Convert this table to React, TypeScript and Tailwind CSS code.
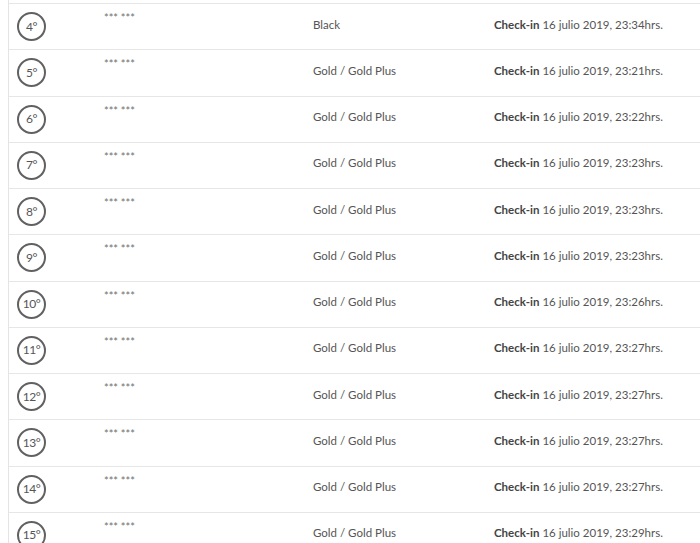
const rows = [
  { pos: 4, tier: 'Black', time: '23:34' },
  { pos: 5, tier: 'Gold / Gold Plus', time: '23:21' },
  { pos: 6, tier: 'Gold / Gold Plus', time: '23:22' },
  { pos: 7, tier: 'Gold / Gold Plus', time: '23:23' },
  { pos: 8, tier: 'Gold / Gold Plus', time: '23:23' },
  { pos: 9, tier: 'Gold / Gold Plus', time: '23:23' },
  { pos: 10, tier: 'Gold / Gold Plus', time: '23:26' },
  { pos: 11, tier: 'Gold / Gold Plus', time: '23:27' },
  { pos: 12, tier: 'Gold / Gold Plus', time: '23:27' },
  { pos: 13, tier: 'Gold / Gold Plus', time: '23:27' },
  { pos: 14, tier: 'Gold / Gold Plus', time: '23:27' },
  { pos: 15, tier: 'Gold / Gold Plus', time: '23:29' },
]

export default function App() {
  return (
    <div className="w-[700px] h-[543px] overflow-hidden bg-white font-['Lato',sans-serif] text-[#555]">
      <div className="ml-2 border-l border-[#e4e4e4] h-full">
        <div className="h-[3px]" />
        {rows.map((r) => (
          <div key={r.pos} className="flex h-[46.25px] border-t border-[#e6e6e6]">
            {/* position badge */}
            <div className="w-[95px] pl-[8px] flex items-center">
              <div className="w-[29px] h-[29px] rounded-full border-2 border-[#616161] flex items-center justify-center text-[12px] text-[#555] tracking-[-0.4px]">
                {r.pos}°
              </div>
            </div>
            <div className="w-[209px] pt-[8px] text-[11px] leading-[12px] text-[#6f6f6f]">*** ***</div>
            <div className="w-[181px] flex items-center pb-[5px] text-[11.5px]">{r.tier}</div>
            <div className="flex items-center pb-[5px] text-[11.5px]">
              <span className="font-bold text-[#444] mr-[3px]">Check-in</span>
              16 julio 2019, {r.time}hrs.
            </div>
          </div>
        ))}
      </div>
    </div>
  )
}
